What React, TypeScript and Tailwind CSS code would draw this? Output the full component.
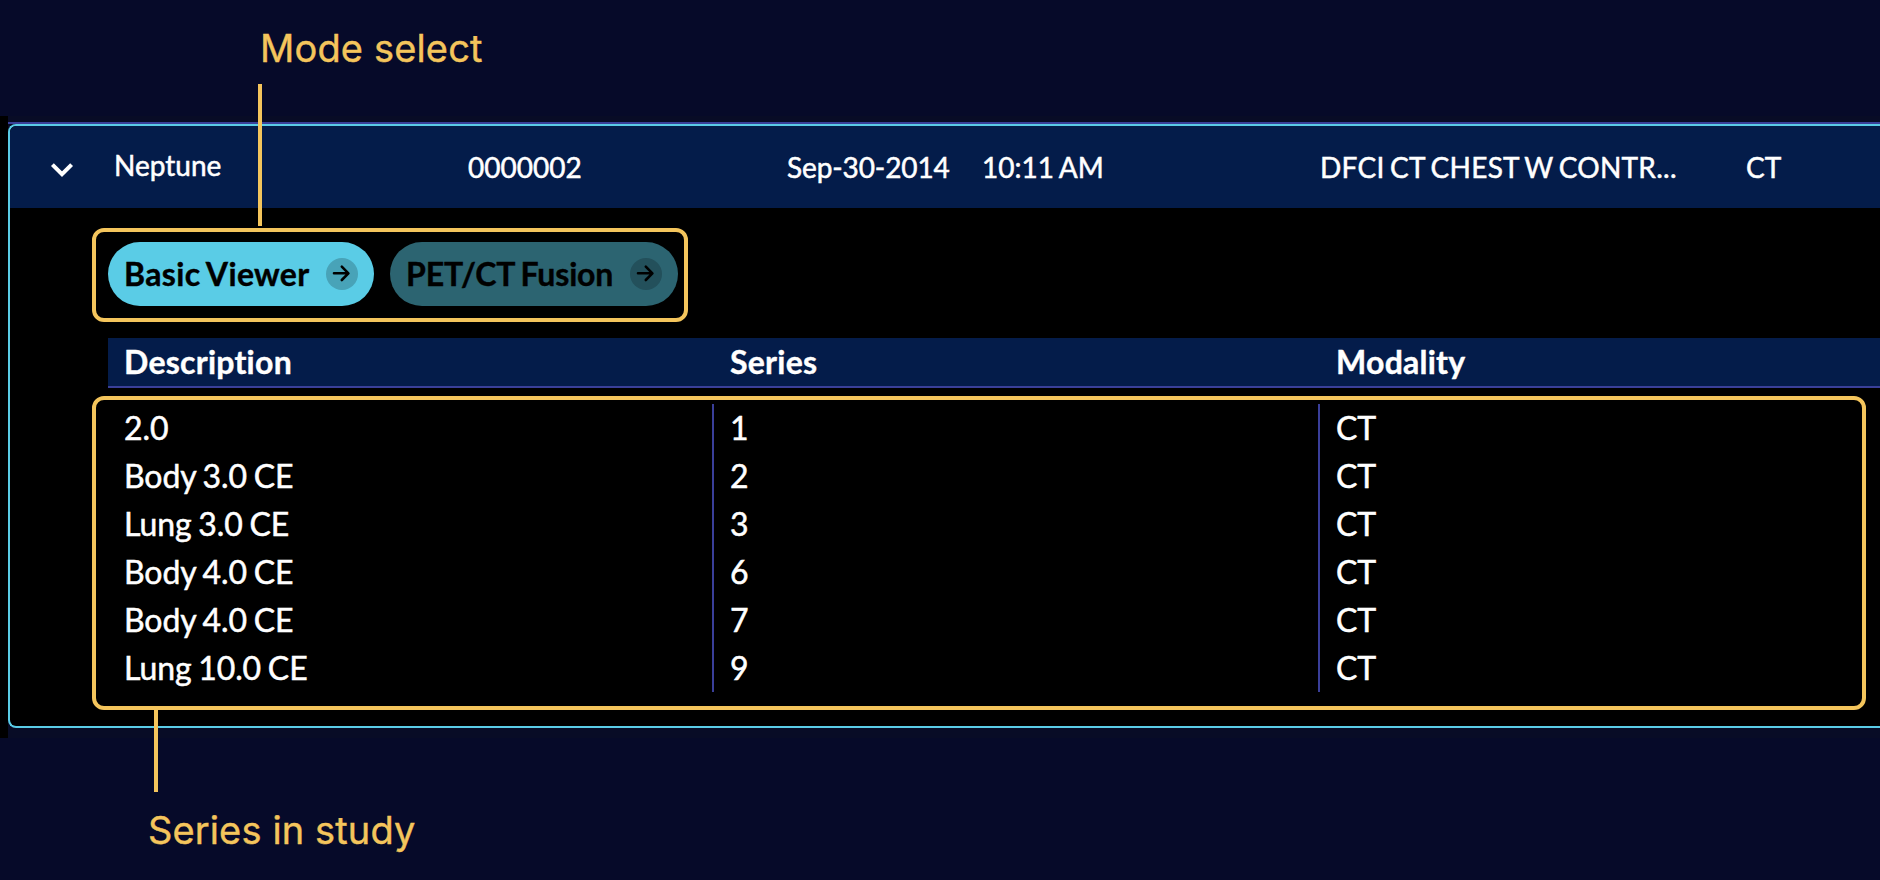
import React from "react";

const series = [
  ["2.0", "1", "CT"],
  ["Body 3.0 CE", "2", "CT"],
  ["Lung 3.0 CE", "3", "CT"],
  ["Body 4.0 CE", "6", "CT"],
  ["Body 4.0 CE", "7", "CT"],
  ["Lung 10.0 CE", "9", "CT"],
];

function ModeButton({ label, dim }: { label: string; dim?: boolean }) {
  return (
    <button
      className={
        "flex h-16 items-center justify-between rounded-full px-4 text-[32px] leading-none font-bold whitespace-nowrap text-black [word-spacing:-1.5px] [-webkit-text-stroke:0.4px_black] " +
        (dim ? "w-72 bg-[#2c6471] tracking-[-0.15px]" : "w-[266px] bg-[#5acce6] tracking-[0.35px]")
      }
    >
      <span>{label}</span>
      <svg width="32" height="32" viewBox="0 0 32 32" fill="none">
        <circle cx="16" cy="16" r="16" fill={dim ? "#23505b" : "#48a3b8"} />
        <path d="M8 15.3H22M15.8 8.6L22.4 15.3L15.8 22" stroke="#000" strokeWidth="2.6" strokeLinecap="round" strokeLinejoin="round" />
      </svg>
    </button>
  );
}

export default function App() {
  return (
    <div className="relative h-[880px] w-[1880px] overflow-hidden bg-[#060a29] pt-[116px] font-['Lato',sans-serif] text-white [font-variant-ligatures:none]">
      <div className="flex h-[622px] bg-[#080c26]">
        <div className="w-2 shrink-0 bg-black" />
        <div className="flex grow flex-col pt-1.5">
          <div className="h-0.5 bg-[#3a3f99]" />
          <section className="h-[604px] overflow-hidden rounded-l-lg border-2 border-r-0 border-[#5acce6] bg-black">
            <div className="flex h-[82px] items-center bg-[#041c4a] text-[28px] leading-none whitespace-nowrap [-webkit-text-stroke:0.5px_white]">
              <div className="flex w-[104px] pl-[40px] pt-1">
                <svg width="24" height="18" viewBox="0 0 24 18" fill="none">
                  <path d="M2.4 4.6L12 14.2L21.6 4.6" stroke="#fff" strokeWidth="4" />
                </svg>
              </div>
              <div className="w-[354px] pb-1">Neptune</div>
              <div className="w-[319px]">0000002</div>
              <div className="w-[195px] tracking-[-0.1px]">Sep-30-2014</div>
              <div className="w-[338px] [word-spacing:-1.5px]">10:11 AM</div>
              <div className="w-[426px] tracking-[0.25px] [word-spacing:-1.8px]">DFCI CT CHEST W CONTR...</div>
              <div>CT</div>
            </div>
            <div className="flex gap-4 pt-[34px] pl-[98px]">
              <ModeButton label="Basic Viewer" />
              <ModeButton label="PET/CT Fusion" dim />
            </div>
            <div className="mt-8 ml-[98px]">
              <div className="flex h-[50px] border-b-2 border-[#3a3f99] bg-[#041c4a] text-[32px] leading-[48px] font-bold tracking-[0.25px] [-webkit-text-stroke:0.4px_white]">
                <div className="w-[606px] pl-4">Description</div>
                <div className="w-[606px] pl-4">Series</div>
                <div className="pl-4">Modality</div>
              </div>
              <div className="pt-4 text-[32px] leading-[48px] tracking-[-0.1px] [word-spacing:-1.3px] [-webkit-text-stroke:0.5px_white]">
                {series.map(([d, s, m], i) => (
                  <div key={i} className="flex h-12">
                    <div className="w-[606px] border-r-2 border-[#3a3f99] pl-4">{d}</div>
                    <div className="w-[606px] border-r-2 border-[#3a3f99] pl-4">{s}</div>
                    <div className="pl-4">{m}</div>
                  </div>
                ))}
              </div>
            </div>
          </section>
        </div>
      </div>

      {/* Callout annotations */}
      <div className="absolute top-[84px] left-[258px] h-[142px] w-1 bg-[#f4c55c]" />
      <div className="absolute top-[228px] left-[92px] h-[94px] w-[596px] rounded-xl border-4 border-[#f4c55c]" />
      <div className="absolute top-[396px] left-[92px] h-[314px] w-[1774px] rounded-xl border-4 border-[#f4c55c]" />
      <div className="absolute top-[710px] left-[154px] h-[82px] w-1 bg-[#f4c55c]" />
      <div className="absolute top-[24px] left-[260px] font-['Inter',sans-serif] text-[38px] leading-[48px] tracking-[0.15px] whitespace-nowrap text-[#f4c55c] [-webkit-text-stroke:0.4px_#f4c55c]">
        Mode select
      </div>
      <div className="absolute top-[806px] left-[148px] font-['Inter',sans-serif] text-[38px] leading-[48px] tracking-[0.12px] whitespace-nowrap text-[#f4c55c] [-webkit-text-stroke:0.4px_#f4c55c]">
        Series in study
      </div>
    </div>
  );
}
